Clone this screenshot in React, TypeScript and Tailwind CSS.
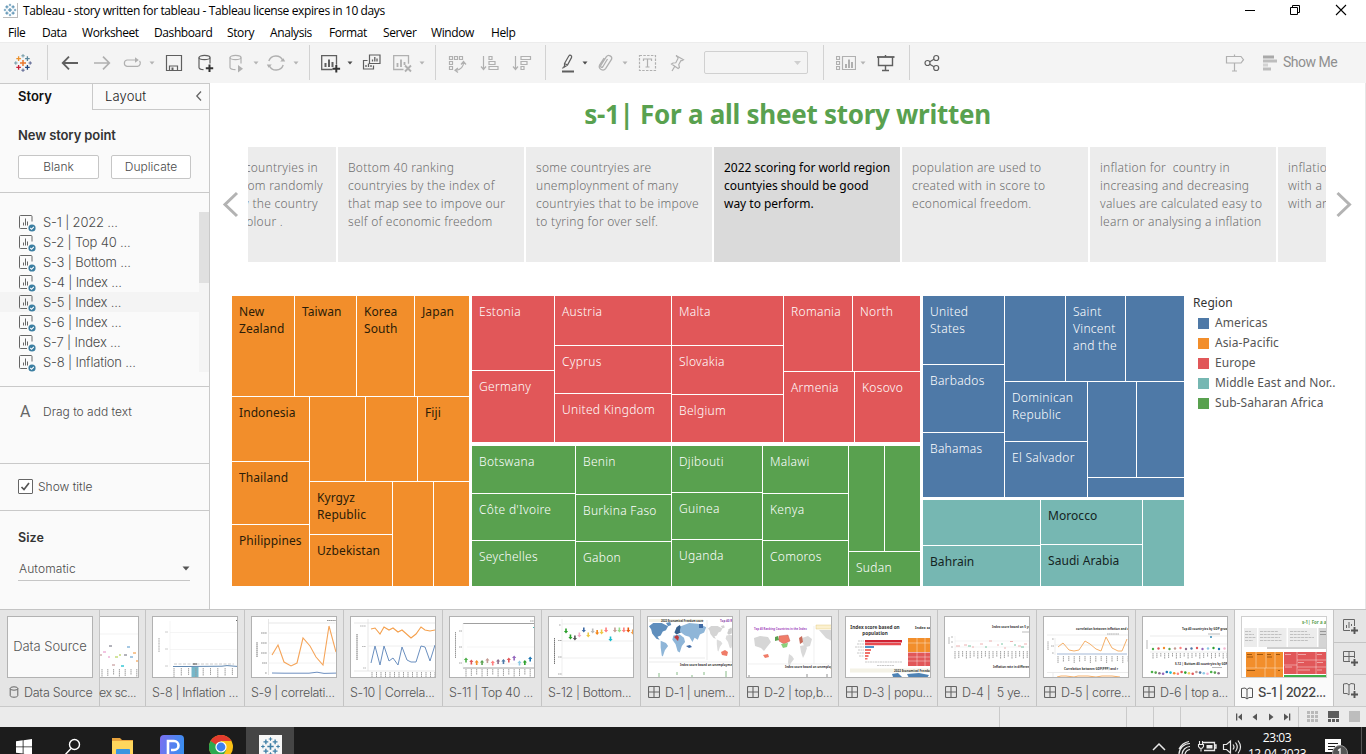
import React from "react";

/* ---------- shared bits ---------- */

type IconProps = { children: React.ReactNode; className?: string; stroke?: string };

function Icon({ children, className = "", stroke = "#5f5f5f" }: IconProps) {
  return (
    <svg
      width="20"
      height="20"
      viewBox="0 0 20 20"
      fill="none"
      stroke={stroke}
      strokeWidth="1.2"
      className={"shrink-0 " + className}
    >
      {children}
    </svg>
  );
}

function Caret({ className = "", dark = false }: { className?: string; dark?: boolean }) {
  return (
    <svg width="6" height="4" viewBox="0 0 6 4" className={"shrink-0 " + className}>
      <path d="M0.5 0.5h5L3 3.5z" fill={dark ? "#4b4b4b" : "#b4b4b4"} />
    </svg>
  );
}

function Sep({ className = "" }: { className?: string }) {
  return <div className={"h-[35px] w-px shrink-0 bg-[#d2d2d2] " + className} />;
}

function plus(x: number, y: number, r: number) {
  return `M${x - r} ${y}h${2 * r}M${x} ${y - r}v${2 * r}`;
}

function TableauMark({ size, mono = false }: { size: number; mono?: boolean }) {
  const c = (color: string) => (mono ? "#3f7fa6" : color);
  return (
    <svg width={size} height={size} viewBox="0 0 20 20" fill="none" strokeWidth="1.3" className="shrink-0">
      <path d={plus(10, 10, 3)} stroke={c("#e8762c")} strokeWidth="1.5" />
      <path d={plus(5.6, 5.6, 2.3)} stroke={c("#eb912c")} />
      <path d={plus(14.4, 5.6, 2.3)} stroke={c("#59879b")} />
      <path d={plus(5.6, 14.4, 2.3)} stroke={c("#c72037")} />
      <path d={plus(14.4, 14.4, 2.3)} stroke={c("#1f447e")} />
      <path d={plus(10, 2.8, 1.7)} stroke={c("#7199a6")} strokeWidth="1" />
      <path d={plus(10, 17.2, 1.7)} stroke={c("#5b6591")} strokeWidth="1" />
      <path d={plus(2.8, 10, 1.7)} stroke={c("#7199a6")} strokeWidth="1" />
      <path d={plus(17.2, 10, 1.7)} stroke={c("#5b6591")} strokeWidth="1" />
    </svg>
  );
}

/* ---------- window chrome ---------- */

function TitleBar() {
  return (
    <div className="flex h-[21px] items-center pl-[3px] text-black">
      <div className="flex h-[15px] w-[15px] items-center justify-center border-r border-b border-[#bbb] bg-white">
        <TableauMark size={14} mono />
      </div>
      <span className="ml-[5px] w-[500px] text-[12px] tracking-[-0.38px] whitespace-nowrap">
        Tableau - story written for tableau - Tableau license expires in 10 days
      </span>
      <svg width="120" height="20" viewBox="0 0 120 20" fill="none" stroke="#000" className="ml-[717px]">
        <path d="M5 9.5h10" />
        <path d="M50.5 6.5h7v7h-7zM52.5 6.5v-2h7v7h-2" />
        <path d="M96 4l10 10M106 4l-10 10" strokeWidth="1.1" />
      </svg>
    </div>
  );
}

const menuItems: [string, string][] = [
  ["File", "w-[34px]"],
  ["Data", "w-[40px]"],
  ["Worksheet", "w-[72px]"],
  ["Dashboard", "w-[73px]"],
  ["Story", "w-[43px]"],
  ["Analysis", "w-[59px]"],
  ["Format", "w-[54px]"],
  ["Server", "w-[48px]"],
  ["Window", "w-[60px]"],
  ["Help", "w-[40px]"],
];

function MenuBar() {
  return (
    <div className="flex h-[21px] items-center pt-[2px] pl-[8px] text-[12px] tracking-[-0.4px] text-black">
      {menuItems.map(([label, w]) => (
        <span key={label} className={"shrink-0 whitespace-nowrap " + w}>
          {label}
        </span>
      ))}
    </div>
  );
}

const G = "#b0b0b0";

function Toolbar() {
  return (
    <div className="flex h-[41px] items-center border-t border-[#ececec] bg-[#f4f4f4] pb-px">
      <div className="ml-[13px]">
        <TableauMark size={20} />
      </div>
      <Sep className="ml-[14px]" />
      <Icon className="ml-[12px]">
        <path d="M2.5 10H18M9 3.7L2.7 10 9 16.3" strokeWidth="1.8" />
      </Icon>
      <Icon className="ml-[12px]" stroke={G}>
        <path d="M2 10h15.500M11 3.700l6.300 6.300-6.300 6.300" strokeWidth="1.7" />
      </Icon>
      <Icon className="ml-[10px]" stroke={G}>
        <path d="M13 7H5a3.200 3.200 0 0 0 0 6.300h10.500a3.200 3.200 0 0 0 2-5.300" />
        <path d="M13 4.300v5.400l3.800-2.700z" fill={G} stroke="none" />
      </Icon>
      <Caret className="ml-[7px]" />
      <Icon className="ml-[9px]">
        <path d="M2.500 2.500h15v15h-15zM5.500 17.500v-4.500h8v4.500" />
        <path d="M7.500 14.500h2v3h-2z" fill="#5f5f5f" stroke="none" />
      </Icon>
      <Icon className="ml-[12px]">
        <ellipse cx="8.500" cy="4.500" rx="5.500" ry="2.200" />
        <path d="M3 4.500v10c0 1.200 2 2 4.500 2.200M14 4.500v6" />
        <path d="M13.500 11.500v7.500M9.800 15.300h7.400" stroke="#333" strokeWidth="2" />
      </Icon>
      <Icon className="ml-[10px]" stroke={G}>
        <ellipse cx="9.500" cy="4.500" rx="5.500" ry="2.200" />
        <path d="M4 4.500v10c0 1.200 2 2 5.500 2.200M15 4.500v6" />
        <path d="M12 12v7.500l5-3.700z" fill={G} stroke="none" />
      </Icon>
      <Caret className="ml-[7px]" />
      <Icon className="ml-[7px]" stroke={G}>
        <path d="M2.800 8A7.500 7.500 0 0 1 16.800 7.500M17.200 12A7.500 7.500 0 0 1 3.200 12.500" strokeWidth="1.400" />
        <path d="M14.200 8.500h5l-1.800-3.300zM5.800 11.500h-5l1.800 3.300z" fill={G} stroke="none" />
      </Icon>
      <Caret className="ml-[7px]" />
      <Sep className="ml-[10px]" />
      <Icon className="ml-[11px]">
        <path d="M11.500 16.500H0.700V2.700h14.800v9" strokeWidth="1.300" />
        <path d="M4.500 14V10M8 14V6.500M11.500 14V9" strokeWidth="2" />
        <path d="M15.300 12v7.600M11.500 15.800h7.600" stroke="#333" strokeWidth="2" />
      </Icon>
      <Caret dark className="ml-[6px]" />
      <Icon className="ml-[9px]">
        <path d="M7.500 2h10.500v8.500h-10.500zM5.500 7.500h-4v8.500h10v-3.500" />
        <path d="M10.500 8.500V6.500M12.800 8.500V4M15 8.500V5.500M4 14v-2M6.500 14v-3.500M9 14v-2" strokeWidth="1.300" />
      </Icon>
      <Icon className="ml-[11px]" stroke={G}>
        <path d="M10.500 16.500H0.700V2.700h14.800v8" strokeWidth="1.300" />
        <path d="M4.500 14V10M8 14V6.500M11.500 12V9" strokeWidth="1.800" />
        <path d="M12 12.500l6 6M18 12.500l-6 6" strokeWidth="1.900" />
      </Icon>
      <Caret className="ml-[6px]" />
      <Sep className="ml-[10px]" />
      <Icon className="ml-[11px]" stroke={G}>
        <path d="M2.500 3.500h3v3h-3zM7.500 3.500h3v3h-3zM12.500 3.500h3v3h-3zM2.500 8.500h3v3h-3zM2.500 13.500h3v3h-3z" />
        <path d="M16.500 9c.5 4-3 8-7.500 8.300M14 11.500l2.500-3 2.500 3M11 15l-3 2.300 3 2.200" />
      </Icon>
      <Icon className="ml-[13px]" stroke={G}>
        <path d="M3.500 3v13M1 13.500l2.500 3 2.500-3M9 3.500h3v3h-3zM9 8.500h6v3h-6zM9 13.500h9v3h-9z" />
      </Icon>
      <Icon className="ml-[12px]" stroke={G}>
        <path d="M3.500 3v13M1 13.500l2.500 3 2.500-3M9 3.500h9.500v3H9zM9 8.500h6v3H9zM9 13.500h3v3H9z" />
      </Icon>
      <Sep className="ml-[13px]" />
      <Icon className="ml-[12px]">
        <path d="M6.500 10.500L10.800 3q.7-1.300 2-.6t.8 2L9.500 12l-3 2zM6.500 10.500l3 1.500" />
        <path d="M4.500 15.500l1.500-2" />
        <path d="M4 18.500h12" strokeWidth="2" />
      </Icon>
      <Caret dark className="ml-[4px]" />
      <Icon className="ml-[7px]" stroke={G}>
        <path
          d="M12.500 6l-4.500 7.500q-1 1.300-1.900.7t-.2-2l5.500-8.500q1.500-2 3.700-.8t1.500 3.300l-6 9.500q-1.800 2.300-4.500.8t-1.500-4.500l4.500-7"
          strokeWidth="1.300"
        />
      </Icon>
      <Caret className="ml-[7px]" />
      <Icon className="ml-[10px]" stroke={G}>
        <path d="M1.500 2.500h16v15h-16z" strokeDasharray="2.500 1.300" />
        <path d="M5.500 8V6h8v2M9.500 6v8M7.500 14h4" />
      </Icon>
      <Icon className="ml-[9px]" stroke={G}>
        <path d="M9 2.500l7.500 4.200-1.500 1-1-.3-2.200 4.100.6 3-1.300 1L4.500 11l1.500-1 2.800-.2 2.200-4.300-.2-1.300zM8 13l-3 5" />
      </Icon>
      <div className="ml-[17px] flex h-[23px] w-[104px] shrink-0 items-center justify-end rounded-[2px] border border-[#d0d0d0] pr-[6px]">
        <svg width="7" height="4" viewBox="0 0 7 4">
          <path d="M0 0h7L3.500 4z" fill="#cfcfcf" />
        </svg>
      </div>
      <Sep className="ml-[15px]" />
      <Icon className="ml-[12px]" stroke={G}>
        <path d="M0.500 3.500h3v3h-3zM0.500 8.500h3v3h-3zM0.500 13.500h3v3h-3zM6.500 3.500h13v13h-13z" />
        <path d="M10 15v-4M13 15V6.500M16 15V9" strokeWidth="2" />
      </Icon>
      <Caret className="ml-[4px]" />
      <Icon className="ml-[10px]">
        <path d="M1 4h17.500" strokeWidth="1.800" />
        <path d="M2.500 4v8.500h14V4M9.500 2v2M9.500 12.500v5M6 17.500h7" strokeWidth="1.400" />
      </Icon>
      <Sep className="ml-[13px]" />
      <Icon className="ml-[12px]">
        <circle cx="5.500" cy="10" r="2.500" />
        <circle cx="14.200" cy="5" r="2.500" />
        <circle cx="14.200" cy="15" r="2.500" />
        <path d="M7.700 8.700l4.300-2.500M7.700 11.300l4.300 2.500" />
      </Icon>
      <Icon className="ml-[283px]" stroke={G}>
        <path d="M1.500 3.500h14.500l2.500 3.200-2.500 3.300H1.500zM9.500 1.500v2M9.500 10v8M7 18h5" />
      </Icon>
      <svg width="14" height="16" viewBox="0 0 14 16" className="ml-[18px] shrink-0">
        <path d="M0 0.500h11v3H0z" fill="#a9a9a9" />
        <path d="M0 4.500h14v3H0zM0 12.500h8v3H0z" fill="#bdbdbd" />
        <path d="M0 8.500h5v3H0z" fill="#d3d3d3" />
      </svg>
      <span className="ml-[6px] font-['Roboto'] text-[14px] tracking-[-0.5px] whitespace-nowrap text-[#8f8f8f]">Show Me</span>
    </div>
  );
}

/* ---------- sidebar ---------- */

const sheets = [
  "S-1 | 2022 ...",
  "S-2 | Top 40 ...",
  "S-3 | Bottom ...",
  "S-4 | Index ...",
  "S-5 | Index ...",
  "S-6 | Index ...",
  "S-7 | Index ...",
  "S-8 | Inflation ...",
];

function SheetIcon() {
  return (
    <svg width="18" height="18" viewBox="0 0 18 18" fill="none" stroke="#666" className="shrink-0">
      <path d="M8 13.500H1.500q-1 0-1-1v-11q0-1 1-1h10.500q1 0 1 1v5" />
      <path d="M4.500 10.500v-3M6.500 10.500v-7M8.500 10.500V6.500" />
      <circle cx="13" cy="13" r="3.600" fill="#3b7ea1" stroke="none" />
      <path d="M11.300 13l1.300 1.300 2.200-2.500" stroke="#fff" strokeWidth="1.100" />
    </svg>
  );
}

function Sidebar() {
  return (
    <aside className="flex w-[210px] shrink-0 flex-col border-t border-r border-[#c9c9c9] bg-[#fafafa] font-['Inter'] text-[#4a4a4a]">
      <div className="flex h-[26px] text-[13px]">
        <div className="w-[92px] pt-[3px] pl-[18px] font-semibold text-[#111]">Story</div>
        <div className="flex flex-1 items-center border-b border-l border-[#c9c9c9] pl-[12px] font-light text-[#222]">
          <span className="tracking-[0.150px]">Layout</span>
          <svg width="8" height="12" viewBox="0 0 8 12" fill="none" stroke="#666" strokeWidth="1.300" className="mr-[6px] mb-[2px] ml-auto">
            <path d="M6 1.500L1.800 6 6 10.500" />
          </svg>
        </div>
      </div>
      <div className="h-[83px] border-b border-[#c9c9c9] pt-[15px] pl-[18px]">
        <div className="text-[13px] leading-[20px] font-semibold tracking-[-0.1px] text-[#333]">New story point</div>
        <div className="mt-[10px] flex gap-[12px] text-[12px] font-light">
          <div className="flex h-[24px] w-[81px] items-center justify-center rounded-[2px] border border-[#c6c6c6] bg-white pb-px">Blank</div>
          <div className="flex h-[24px] w-[80px] items-center justify-center rounded-[2px] border border-[#c6c6c6] bg-white pb-px">
            Duplicate
          </div>
        </div>
      </div>
      <div className="flex h-[194px] border-b border-[#c9c9c9] pt-[19px] pb-[14px]">
        <div className="flex-1">
          {sheets.map((s, i) => (
            <div
              key={s}
              className={"flex h-[20px] items-center pl-[19px] text-[13px] font-light " + (i === 4 ? "bg-[#f4f4f4]" : "")}
            >
              <div className="pt-[4px]">
                <SheetIcon />
              </div>
              <span className="ml-[6px] pt-[2px] tracking-[-0.170px] whitespace-pre">{s}</span>
            </div>
          ))}
        </div>
        <div className="w-[10px] bg-[#f4f4f4]">
          <div className="h-[71px] bg-[#e0e0e0]" />
        </div>
      </div>
      <div className="flex h-[77px] border-b border-[#c9c9c9] pt-[16px] pl-[20px] text-[12px] font-light">
        <span className="w-[23px] font-['Roboto'] text-[16px] leading-[18px] font-normal text-[#666]">A</span>
        <span className="leading-[18px]">Drag to add text</span>
      </div>
      <div className="flex h-[47px] items-center border-b border-[#c9c9c9] pb-px pl-[18px] text-[12px] font-light">
        <div className="flex h-[15px] w-[15px] items-center justify-center rounded-[1px] border border-[#666] bg-white">
          <svg width="11" height="11" viewBox="0 0 11 11" fill="none" stroke="#555" strokeWidth="1.700">
            <path d="M1.500 6l2.500 2.500 5-6.500" />
          </svg>
        </div>
        <span className="ml-[5px]">Show title</span>
      </div>
      <div className="pt-[17px] pl-[18px]">
        <div className="text-[12.500px] leading-[20px] font-semibold tracking-[0.100px] text-[#333]">Size</div>
        <div className="mt-[9px] flex h-[24px] w-[172px] items-center justify-between border-b border-[#c6c6c6] pl-px text-[12px] font-light">
          <span className="tracking-[0.100px]">Automatic</span>
          <svg width="8" height="5" viewBox="0 0 8 5">
            <path d="M0.500 0.500h7L4 4.500z" fill="#555" />
          </svg>
        </div>
      </div>
    </aside>
  );
}

/* ---------- story navigator ---------- */

const storyPoints: string[][] = [
  ["Bottom 40 ranking", "countryies by the index of", "that map see to impove our", "self of economic freedom"],
  ["some countryies are", "unemploynment of many", "countryies that to be impove", "to tyring for over self."],
  ["2022 scoring for world region", "countyies should be good", "way to perform."],
  ["population are used to", "created with in score to", "economical freedom."],
  ["inflation for  country in", "increasing and decreasing", "values are calculated easy to", "learn or analysing a inflation"],
];

function Navigator() {
  return (
    <div className="flex h-[115px] items-center">
      <svg width="38" height="30" viewBox="0 0 38 30" fill="none" stroke="#b3b3b3" strokeWidth="3" className="mb-[2px] shrink-0">
        <path d="M27 4L15 15.500 27 27" />
      </svg>
      <div className="flex h-full w-[1078px] shrink-0 gap-[2px] overflow-hidden text-[12px] leading-[18px] whitespace-pre">
        <div className="flex w-[88px] shrink-0 flex-col items-end overflow-hidden bg-[#ececec] pt-[11.500px] font-light tracking-[0.280px] text-[#6e6e6e]">
          <div className="mr-[18px]">countryies in</div>
          <div className="mr-[13px]">from randomly</div>
          <div className="mr-[18px]">by the country</div>
          <div className="mr-[53px]">colour .</div>
        </div>
        {storyPoints.map((lines, i) => (
          <div
            key={i}
            className={
              "w-[186px] shrink-0 overflow-hidden pt-[11.500px] pl-[10px] " +
              (i === 2
                ? "bg-[#dadada] font-normal tracking-[-0.020px] text-black"
                : "bg-[#ececec] font-light tracking-[0.260px] text-[#6e6e6e]")
            }
          >
            {lines.map((l) => (
              <div key={l}>{l}</div>
            ))}
          </div>
        ))}
        <div className="w-[48px] shrink-0 overflow-hidden bg-[#ececec] pt-[11.500px] pl-[10px] font-light tracking-[0.280px] text-[#6e6e6e]">
          <div>inflation</div>
          <div>with a</div>
          <div>with and</div>
        </div>
      </div>
      <svg width="38" height="30" viewBox="0 0 38 30" fill="none" stroke="#b3b3b3" strokeWidth="3" className="mb-[2px] shrink-0">
        <path d="M11.500 4L23.500 15.500 11.500 27" />
      </svg>
    </div>
  );
}

/* ---------- treemap ---------- */

type Leaf = { t?: string };
type Split = { dir: "row" | "col"; kids: [number, Node][] };
type Node = Leaf | Split;

const leaf = (t?: string): Leaf => ({ t });
const row = (...kids: [number, Node][]): Split => ({ dir: "row", kids });
const col = (...kids: [number, Node][]): Split => ({ dir: "col", kids });

const asia = col(
  [100, row([62, leaf("New\nZealand")], [61, leaf("Taiwan")], [57, leaf("Korea\nSouth")], [54, leaf("Japan")])],
  [
    189,
    row(
      [77, col([64, leaf("Indonesia")], [62, leaf("Thailand")], [61, leaf("Philippines")])],
      [
        159,
        col(
          [84, row([55, leaf()], [51, leaf()], [51, leaf("Fiji")])],
          [104, row([82, col([52, leaf("Kyrgyz\nRepublic")], [51, leaf("Uzbekistan")])], [40, leaf()], [35, leaf()])],
        ),
      ],
    ),
  ],
);

const europe = row(
  [82, col([74, leaf("Estonia")], [71, leaf("Germany")])],
  [116, col([49, leaf("Austria")], [47, leaf("Cyprus")], [48, leaf("United Kingdom")])],
  [111, col([49, leaf("Malta")], [48, leaf("Slovakia")], [47, leaf("Belgium")])],
  [
    136,
    col([75, row([68, leaf("Romania")], [67, leaf("North")])], [70, row([70, leaf("Armenia")], [65, leaf("Kosovo")])]),
  ],
);

const africa = row(
  [103, col([47, leaf("Botswana")], [46, leaf("Côte d'Ivoire")], [45, leaf("Seychelles")])],
  [95, col([48, leaf("Benin")], [46, leaf("Burkina Faso")], [44, leaf("Gabon")])],
  [90, col([46, leaf("Djibouti")], [46, leaf("Guinea")], [46, leaf("Uganda")])],
  [85, col([47, leaf("Malawi")], [46, leaf("Kenya")], [45, leaf("Comoros")])],
  [71, col([105, row([35, leaf()], [35, leaf()])], [34, leaf("Sudan")])],
);

const americas = row(
  [81, col([68, leaf("United\nStates")], [67, leaf("Barbados")], [64, leaf("Bahamas")])],
  [
    179,
    col(
      [85, row([60, leaf()], [59, leaf("Saint\nVincent\nand the")], [58, leaf()])],
      [
        115,
        row(
          [82, col([59, leaf("Dominican\nRepublic")], [55, leaf("El Salvador")])],
          [96, col([95, row([48, leaf()], [47, leaf()])], [19, leaf()])],
        ),
      ],
    ),
  ],
);

const middleEast = row(
  [117, col([45, leaf()], [40, leaf("Bahrain")])],
  [101, col([44, leaf("Morocco")], [41, leaf("Saudi Arabia")])],
  [41, leaf()],
);

function Cells({ node, fill }: { node: Node; fill: string }) {
  if (!("dir" in node)) {
    return (
      <div className={"min-h-0 min-w-0 flex-1 overflow-hidden pt-[7px] pl-[7px] whitespace-pre " + fill}>{node.t}</div>
    );
  }
  return (
    <div className={"flex min-h-0 min-w-0 flex-1 gap-px " + (node.dir === "col" ? "flex-col" : "flex-row")}>
      {node.kids.map(([size, kid], i) => (
        <div key={i} className="flex min-h-0 min-w-0 shrink-0" style={{ flexBasis: size }}>
          <Cells node={kid} fill={fill} />
        </div>
      ))}
    </div>
  );
}

function Treemap() {
  return (
    <div className="flex h-[290px] w-[952px] shrink-0 gap-[3px] text-[12px] leading-[17px] font-light tracking-[0.300px]">
      <div className="flex w-[237px] font-normal tracking-[0.080px] text-[#2b1c08]">
        <Cells node={asia} fill="bg-[#f28e2b]" />
      </div>
      <div className="flex w-[448px] flex-col gap-[4px] text-white">
        <div className="flex h-[146px]">
          <Cells node={europe} fill="bg-[#e15759]" />
        </div>
        <div className="flex h-[140px]">
          <Cells node={africa} fill="bg-[#59a14f]" />
        </div>
      </div>
      <div className="flex w-[261px] flex-col gap-[3px]">
        <div className="flex h-[201px] text-white">
          <Cells node={americas} fill="bg-[#4e79a7]" />
        </div>
        <div className="flex h-[86px] font-normal tracking-[0.060px] text-[#142422]">
          <Cells node={middleEast} fill="bg-[#76b7b2]" />
        </div>
      </div>
    </div>
  );
}

const legend: [string, string][] = [
  ["Americas", "bg-[#4e79a7]"],
  ["Asia-Pacific", "bg-[#f28e2b]"],
  ["Europe", "bg-[#e15759]"],
  ["Middle East and Nor..", "bg-[#76b7b2]"],
  ["Sub-Saharan Africa", "bg-[#59a14f]"],
];

function StoryView() {
  return (
    <main className="flex flex-1 flex-col border-r border-[#e6e6e6] bg-white font-['Noto_Sans']">
      <h1 className="flex h-[64px] items-center justify-center pb-[2px] text-[26px] font-bold tracking-[-0.270px] text-[#59a14f]">
        s-1| For a all sheet story written
      </h1>
      <Navigator />
      <div className="mt-[34px] flex pl-[22px]">
        <Treemap />
        <div className="ml-[9px] text-[12px] font-normal tracking-[0.080px] text-[#555]">
          <div className="h-[17px] leading-[14px] text-[#333]">Region</div>
          {legend.map(([name, color]) => (
            <div key={name} className="flex h-[20px] items-center gap-[6px] pl-[5px] whitespace-nowrap">
              <span className={"h-[11px] w-[11px] " + color} />
              {name}
            </div>
          ))}
        </div>
      </div>
    </main>
  );
}

/* ---------- sheet tabs ---------- */

const palette = ["#4daf4a", "#e15759", "#f28e2b", "#59a14f", "#c49c94", "#ff7f7f", "#8c6d8c", "#4e79a7", "#e15759", "#9467bd", "#8ecae6", "#2ca02c", "#1f77b4", "#f7b6d2", "#f1ce63", "#17becf"];

function Tiny({ x, y, s = 3, children, anchor, color = "#333", weight }: { x: number; y: number; s?: number; children: string; anchor?: "middle"; color?: string; weight?: string }) {
  return (
    <text x={x} y={y} fontSize={s} fill={color} textAnchor={anchor} fontWeight={weight} fontFamily="Noto Sans">
      {children}
    </text>
  );
}

function Ticks({ x, y, n, step, h }: { x: number; y: number; n: number; step: number; h: number }) {
  return (
    <g stroke="#999" strokeWidth="0.9" strokeDasharray="1.500 0.400">
      {Array.from({ length: n }, (_, i) => (
        <path key={i} d={`M${x + i * step} ${y}v${h - (i % 3)}`} />
      ))}
    </g>
  );
}

function WorldMap({ colored }: { colored?: boolean }) {
  const a = colored ? "#5f8fbd" : "#d4d4d4";
  const b = colored ? "#8fb6d8" : "#dcdcdc";
  return (
    <g>
      <path d="M0 3l4-3 8 0 6 3 -2 4 -3 1 -2 4 -3 1 2 3 -3-1 -4-5 -1-4z" fill={a} />
      <path d="M11 17l5 2 2 3 -3 4 -2 6 -1-1 -1-8z" fill={b} />
      <path d="M23 12l6-1 4 3 1 4 -3 4 -2 6 -2-1 -2-7 -3-4z" fill={b} />
      <path d="M24 9l2-5 3-2 2 3 -1 4 -4 2z" fill={colored ? "#37618f" : "#cccccc"} />
      <path d="M30 3l8-3 10 1 6 3 -2 5 -4 2 -2 5 -3-2 -2 4 -3-5 -4-1 -5-4z" fill={b} />
      <path d="M16 0l4-1 1 3 -3 1z" fill={a} />
    </g>
  );
}

function Down({ x, y, c }: { x: number; y: number; c: string }) {
  return <path d={`M${x - 0.8} ${y - 2.5}h1.600v2.500h1.300l-2.100 2.500-2.100-2.500h1.300z`} fill={c} />;
}
function Up({ x, y, c }: { x: number; y: number; c: string }) {
  return <path d={`M${x - 0.8} ${y + 2.5}h1.600v-2.500h1.300l-2.100-2.500-2.100 2.500h1.300z`} fill={c} />;
}

const thumbs: Record<string, React.ReactNode> = {
  s8: (
    <g>
      <path d="M18 5v46M18 16.500h67M18 33.500h67" stroke="#eee" strokeWidth="0.600" />
      <path d="M21 50.500l14 0 35 -.3 5-.6 10 .8" fill="none" stroke="#4e79a7" strokeWidth="0.900" />
      <path d="M39.500 51h7v10h-7z" fill="#76b7c9" />
      <Ticks x={22} y={52} n={9} step={7.300} h={9} />
      <path d="M7 36V22" stroke="#aaa" strokeDasharray="1.200 .4" />
      <path d="M13 16h3M13 33h3M13 50h3M22 48h60" stroke="#ccc" strokeDasharray="3 1.500" />
      <path d="M41 48h4" stroke="#444" />
      <path d="M84 4.500h2" stroke="#666" />
    </g>
  ),
  s9: (
    <g fill="none">
      <path d="M17.500 3v56M17.500 7h67" stroke="#ddd" strokeWidth="0.700" />
      <path d="M17.500 17h67M17.500 27h67M17.500 37h67M17.500 47h67" stroke="#f2f2f2" />
      <path d="M21 39l6-10 6 17 7 4 6-3 6-25 7 8 6 11 7 8 6-39 7 26" stroke="#f5a55a" strokeWidth="1.100" />
      <path d="M21 57l12 .2 25 0 8-1 7 1.200 12-.3" stroke="#6d8fc0" />
      <path d="M6 41V26" stroke="#777" strokeDasharray="1.500 .4" />
      <path d="M10 17h6M10 27h6M10 37h6M11 47h5M14 57h2M76 4.500h9" stroke="#999" strokeWidth="1.200" strokeDasharray="1.500 .3" />
    </g>
  ),
  s10: (
    <g fill="none">
      <path d="M18 3v52M4 7h81M4 55h81" stroke="#ddd" strokeWidth="0.700" />
      <path d="M18 30h67" stroke="#eee" />
      <path d="M21 13l4-1 5 6 4-7 5 3 4-2 5 4 4-2 9 8 5-4 5-7 4 3 5 1 5-1" stroke="#f5a04c" strokeWidth="1.100" />
      <path d="M21 47l4-17 5 19 4-19 5 15 4-3 5 7 4-18 5 13 4 2h5l5-16 4 1 5 14 5-16" stroke="#6a8fbf" />
      <path d="M7 44V18" stroke="#777" strokeDasharray="1.500 .4" />
      <path d="M10 10h6M12 30.500h4M13 52h3" stroke="#bbb" strokeDasharray="1.500 .3" />
      <Ticks x={22} y={56} n={15} step={4.500} h={7} />
    </g>
  ),
  s11: (
    <g>
      <path d="M14 7.500h71M14 52h71" stroke="#888" strokeWidth="0.800" />
      <path d="M14 7v45M18 31h67M18 48h67" stroke="#eee" strokeWidth="0.600" />
      {[44, 46, 46.5, 46.5, 44.500, 47, 45.500, 45.500, 44, 42, 47, 46.500, 43].map((y, i) => (
        <Up key={i} x={17 + i * 5.350} y={y} c={palette[i]} />
      ))}
      <path d="M6.500 42V16" stroke="#999" strokeDasharray="1.500 .4" />
      <path d="M10 15h3M10 31h3M10 47h3M81 5h4" stroke="#aaa" strokeDasharray="1.500 .3" />
      <path d="M84 11.500h2" stroke="#4bb" />
      <Ticks x={17} y={53} n={13} step={5.350} h={8} />
    </g>
  ),
  s12: (
    <g>
      <path d="M14 3v57M14 8h71M14 25h71M14 42h71" stroke="#e8e8e8" strokeWidth="0.700" />
      {[15, 21, 22, 19, 14, 19, 15, 16.500, 16, 14, 23, 14, 14, 14, 14, 16].map((y, i) => (
        <Down key={i} x={18 + i * 4.450} y={y} c={["#2ca02c", "#2ca02c", "#555", "#f4a9c5", "#3f6aa5", "#edc948", "#bbb", "#f58518", "#edc948", "#ff7f7f", "#17becf", "#c49c94", "#98df8a", "#ff7f7f", "#e8590c", "#f5a04c"][i]} />
      ))}
      <path d="M6.500 48V22" stroke="#777" strokeDasharray="1.500 .4" />
      <path d="M11 9h2M10 24.500h4M10 41h4M10 58h4" stroke="#aaa" strokeDasharray="1.500 .3" />
    </g>
  ),
  d1: (
    <g>
      <path d="M2 3h54v3H2z" fill="#f4f2e6" />
      <Tiny x={14} y={5.500} s={2.700} weight="bold">2022 Economical Freedom score</Tiny>
      <Tiny x={73} y={5.500} color="#8e44ad" weight="bold">Top 40 Ranking</Tiny>
      <g transform="translate(2 7) scale(1.060 1.050)"><WorldMap colored /></g>
      <path d="M27 21l3-2 2 2-1 4z" fill="#c0393b" />
      <path d="M39 30l4-1 2 2-3 1zM52 8h4v4h-4z" fill="#3f6aa5" />
      <g transform="translate(61 10) scale(.8)"><WorldMap /></g>
      <path d="M74 36l4-2 3 2-1 4-5-1z" fill="#f07c68" />
      <path d="M2 42h56M60 4v40M2 46h84" stroke="#ddd" strokeWidth="0.600" />
      <Tiny x={33} y={50} weight="bold">Index score based on unemployment</Tiny>
      <path d="M12 61v-4M30 59v-3M45 61v-2M57 59v-3M79 61v-6" stroke="#8b8" />
    </g>
  ),
  d2: (
    <g>
      <Tiny x={8} y={13.500} s={2.800} color="#a44bc0" weight="bold">Top 40 Ranking Countries in the Index</Tiny>
      <path d="M70 9h16v4H70z" fill="#fbf0cf" stroke="#e1c36b" strokeWidth=".4" />
      <path d="M8 22l6-2 8 1 3 5-4 5-3 4-3-3-6-2z" fill="#d6d6d6" />
      <path d="M43 38l3 2 2 3-3 4-2 5-1-6zM54 30l5-1 2 3-2 6-2 4-2-6zM56 22l6-2 4 3-2 7-4 1-3-3z" fill="#d9d9d9" />
      <path d="M29 21l3-1 1 4-4 1z" fill="#59a14f" />
      <path d="M33 20l9-1 2 6-6 3-5-3z" fill="#f07c68" stroke="#b55" strokeWidth=".4" />
      <path d="M35 28l7-1-1 4-4 1z" fill="#8bd17c" />
      <path d="M53 22l3-2 1 6-3 2z" fill="#c76b5a" />
      <path d="M17 39l5-1 1 3-4 1z" fill="#f07c68" />
      <path d="M73 14l13 0v11l-6-3z" fill="#d8d8d8" />
      <path d="M2 48h84M68 10v38" stroke="#e5e5e5" strokeWidth=".6" />
      <Tiny x={39} y={52} weight="bold">Index score based on unemployment</Tiny>
      <path d="M3 59v2M61 58v3M81 58v3" stroke="#777" strokeWidth=".8" />
    </g>
  ),
  d3: (
    <g>
      <Tiny x={30} y={13} s={4.700} anchor="middle" weight="bold">Index score based on</Tiny>
      <Tiny x={30} y={19} s={4.700} anchor="middle" weight="bold">population</Tiny>
      <Tiny x={70} y={13} s={3.800} weight="bold">Index score</Tiny>
      <path d="M20 24h37v2.500H20z" fill="#cf2233" />
      <path d="M20 27h36v2.300H20z" fill="#e84a4f" />
      <path d="M20 30h9v2H20z" fill="#4e93c9" />
      <path d="M20 33h6v2H20zM20 36h5v2h-5zM20 39h3.500v2h-3.500zM20 42h2.500v1.500h-2.500z" fill="#f0716a" />
      <path d="M13 25h6M12 28h7M10 31h9M13 34h6M12 37h7M14 40h5M20 46h37M32 49.500h17" stroke="#bbb" strokeWidth=".8" strokeDasharray="2 .5" />
      <path d="M63 22h23v14H63z" fill="#f28e2b" />
      <path d="M63 36.500h23V50H63z" fill="#e15759" />
      <path d="M63 27h23M72 22v28M80 22v28M63 41h23M63 45h23" stroke="#fff" strokeWidth=".4" />
      <path d="M5 52.500h81v4H5z" fill="#f4f2e6" />
      <Tiny x={49} y={55.500} weight="bold">2022 Economical Freedom score</Tiny>
      <path d="M47 58l6-1 4 4h-9zM62 58l12-1 10 2-2 3H64z" fill="#4e83b5" />
    </g>
  ),
  d4: (
    <g>
      <Tiny x={48} y={12} weight="bold">Index score based on 5 year</Tiny>
      <path d="M11 20v14M11 25h74M11 31h74" stroke="#eee" strokeWidth=".6" />
      <path d="M12 30h4M20 29h3M28 31h2M36 28h3M45 25h3M53 29h2M60 32h2M66 25.500h3M74 30h3M80 28h3" stroke="#e8a0a0" strokeWidth=".8" />
      <path d="M24 30h3M41 31h2M57 28h2M70 29h2M77 31h3" stroke="#59b88f" strokeWidth=".8" />
      <Ticks x={11} y={35} n={20} step={3.800} h={8} />
      <path d="M5 28v-7M7 21h2M7 26h2M7 31h2M78 16h8" stroke="#aaa" strokeWidth=".8" />
      <Tiny x={49} y={52} weight="bold">Inflation rate in different</Tiny>
    </g>
  ),
  d5: (
    <g fill="none">
      <Tiny x={33} y={14} weight="bold">correlation between inflation and unemp</Tiny>
      <path d="M4 19h82M12 22v17M12 29h74" stroke="#e5e5e5" strokeWidth=".7" />
      <path d="M15 31l5-4 6 7 5 1 5-1 6-9 5 3 6 5 5 2 5-14 6 11 6 3 4 0 5-12" stroke="#f5b06a" />
      <path d="M14 38h70" stroke="#8aa4cc" strokeWidth=".8" />
      <Ticks x={15} y={40} n={14} step={5.400} h={7} />
      <path d="M5 34v-9M9 23h2M8 30h3M9 37h2M64 18h12" stroke="#999" strokeWidth=".8" strokeDasharray="1.500 .3" />
      <Tiny x={21} y={54} weight="bold">Correlation between GDP(PPP) and r</Tiny>
      <path d="M14 61l4-1h5l8 1 4-1h10l8 1 6-1h10l8 1" stroke="#f5b06a" />
      <path d="M4 56.500h82M10 57v4" stroke="#ddd" strokeWidth=".6" />
    </g>
  ),
  d6: (
    <g>
      <Tiny x={40} y={14} weight="bold">Top 40 countryies by GDP growth</Tiny>
      <path d="M8 20h78M8 36h78M8 28h78" stroke="#ddd" strokeWidth=".6" />
      {Array.from({ length: 14 }, (_, i) => (
        <circle key={i} cx={11 + i * 5.500} cy={33 - (i % 3) * 0.500} r="1.200" fill={palette[i]} />
      ))}
      <path d="M69 20v2" stroke="#17a" strokeWidth="1.300" />
      <Ticks x={11} y={37} n={20} step={3.900} h={6} />
      <path d="M5 33v-9M66 18h12M70 51.500h10" stroke="#999" strokeWidth=".7" />
      <Tiny x={33} y={49} weight="bold">S-12 | Bottom 40 countryies by GDP</Tiny>
      {Array.from({ length: 19 }, (_, i) => (
        <circle key={i} cx={10 + i * 3.700} cy={56 + ((i * 5) % 4) * 0.600} r="1.300" fill={palette[(i * 3) % 16]} />
      ))}
    </g>
  ),
  story: (
    <g>
      <Tiny x={61} y={8} s={4.400} color="#59a14f" weight="bold">s-1| For a all sheet</Tiny>
      <path d="M3 12h13v19H3zM17.500 12h28v19h-28zM47 12h29v19H47z" fill="#ececec" />
      <path d="M77.500 12H86v19h-8.500z" fill="#d4d4d4" />
      <path d="M4 15.500h6M4 18.500h9M4 21.500h11M4 24.500h8M19 15.500h18M19 18.500h22M19 21.500h20M19 24.500h22M49 15.500h17M49 18.500h20M49 21.500h24M49 24.500h18" stroke="#bbb" strokeWidth=".9" strokeDasharray="3 .7" />
      <path d="M79 15.500h7M79 18.500h7M26 32h60" stroke="#888" strokeWidth=".8" />
      <path d="M5 36h37v25H5z" fill="#f28e2b" />
      <path d="M43 36h43v22H43z" fill="#e15759" />
      <path d="M43 59h43v2H43z" fill="#3fae49" />
      <path d="M5 52h37M15 36v16M25 36v16M34 36v25M43 49h13M56 36v22M56 44h30M56 51h30M75 36v22M24 52v9" stroke="#fff" strokeWidth=".4" />
      <path d="M6 38.500h5M6 41h6M16 38.500h6M26 38.500h4M26 41h5M35 38.500h4M6 54.500h8M37 54.500h2" stroke="#7a3e00" strokeWidth=".7" />
      <path d="M44 38.500h6M57 38.500h8M57 46.500h6M57 54h12M44 51h7M76 38.500h5M76 46.500h6M76 54h5" stroke="#f7c7c7" strokeWidth=".7" />
    </g>
  ),
};

function Thumb({ id, className = "border-[#b2b2b2]" }: { id: string; className?: string }) {
  return (
    <div className={"h-[62px] w-[86px] shrink-0 overflow-hidden border bg-white tracking-normal " + className}>
      <svg width="84" height="60" viewBox="1 1 84 60">
        {thumbs[id]}
      </svg>
    </div>
  );
}

function GridIcon() {
  return (
    <svg width="12" height="12" viewBox="0 0 12 12" fill="none" stroke="#666" className="mr-[5px] mb-[2px] ml-px shrink-0">
      <path d="M1.500 .5h9q1 0 1 1v9q0 1-1 1h-9q-1 0-1-1v-9q0-1 1-1zM6 .5v11M.5 6h11" strokeWidth="1.100" />
    </svg>
  );
}

const tabs: { id: string; label: string; kind: "s" | "d" }[] = [
  { id: "s8", label: "S-8 | Inflation ...", kind: "s" },
  { id: "s9", label: "S-9 | correlati...", kind: "s" },
  { id: "s10", label: "S-10 | Correla...", kind: "s" },
  { id: "s11", label: "S-11 | Top 40 ...", kind: "s" },
  { id: "s12", label: "S-12 | Bottom...", kind: "s" },
  { id: "d1", label: "D-1 | unem...", kind: "d" },
  { id: "d2", label: "D-2 | top,b...", kind: "d" },
  { id: "d3", label: "D-3 | popu...", kind: "d" },
  { id: "d4", label: "D-4 |  5 ye...", kind: "d" },
  { id: "d5", label: "D-5 | corre...", kind: "d" },
  { id: "d6", label: "D-6 | top a...", kind: "d" },
];

function TabStrip() {
  return (
    <div className="flex h-[97px] border-t border-[#c4c4c4] bg-[#e5e5e5] font-['Inter'] text-[12.500px] font-light tracking-[-0.330px] text-[#555]">
      <div className="w-[100px] shrink-0 border-r border-[#c4c4c4] pt-[6px] pl-[7px]">
        <div className="flex h-[62px] w-[86px] items-center justify-center border border-[#b2b2b2] bg-[#fafafa] text-[13px] tracking-[-0.050px] whitespace-nowrap">
          Data Source
        </div>
        <div className="mt-[5px] flex h-[20px] items-center pl-[2px] text-[12.500px]">
          <svg width="10" height="12" viewBox="0 0 10 12" fill="none" stroke="#666" className="mb-[2px] shrink-0">
            <ellipse cx="5" cy="2.500" rx="3.800" ry="1.700" />
            <path d="M1.200 2.500v7c0 2.300 7.600 2.300 7.600 0v-7" />
          </svg>
          <span className="ml-[5px] tracking-[-0.250px] whitespace-nowrap">Data Source</span>
        </div>
      </div>
      <div className="w-[46px] shrink-0 border-r border-[#c4c4c4] pt-[6px]">
        <div className="h-[62px] w-[39px] border-y border-r border-[#b2b2b2] bg-white">
          <svg width="38" height="60" viewBox="0 0 38 60">
            <path d="M0 38h2M12 48h3" stroke="#b88" />
            <path d="M3 35h3M8 40h2" stroke="#e78ac3" />
            <path d="M9 29h3M24 38h3" stroke="#667" />
            <path d="M15 40h3M19 38h2" stroke="#a6c93a" />
            <path d="M21 49h3" stroke="#17becf" strokeWidth="1.300" />
            <path d="M27 30h3M30 40h3" stroke="#4e93c9" />
            <path d="M33 36h3M36 44h2" stroke="#f28e2b" />
            <Ticks x={2} y={52} n={7} step={5.800} h={8} />
            <path d="M0 17h38" stroke="#f3f3f3" />
          </svg>
        </div>
        <div className="mt-[5px] -ml-px h-[20px] leading-[20px] tracking-[-0.500px] whitespace-nowrap">ex sc...</div>
      </div>
      {tabs.map((t) => (
        <div key={t.id} className="w-[99px] shrink-0 border-r border-[#c4c4c4] pt-[6px] pl-[6px]">
          <Thumb id={t.id} />
          <div className="mt-[5px] flex h-[20px] items-center whitespace-pre">
            {t.kind === "d" && <GridIcon />}
            <span>{t.label}</span>
          </div>
        </div>
      ))}
      <div className="w-[99px] shrink-0 border-r border-[#c4c4c4] bg-[#fafafa] pt-[6px] pl-[6px]">
        <Thumb id="story" className="border-[#cfcfcf]" />
        <div className="mt-[5px] flex h-[20px] items-center text-[13px] font-medium tracking-[-0.600px] whitespace-pre text-[#444]">
          <svg width="12" height="13" viewBox="0 0 12 13" fill="none" stroke="#555" className="mr-[5px] shrink-0">
            <path d="M6 2.500v9.500M6 2.500L4 1 .5 1.500v9L4 10.500l2 1.500 2-1.500 3.500 0v-9L8 1z" />
          </svg>
          S-1 | 2022...
        </div>
      </div>
      <div className="flex flex-1 flex-col">
        <div className="flex h-[33px] items-center justify-center border-b border-[#c4c4c4]">
          <svg width="17" height="17" viewBox="0 0 17 17" fill="none" stroke="#666">
            <path d="M8 12.500H1.500v-11h11v6.500M4.500 10V7M7 10V4M9.500 8V6" />
            <path d="M12.500 9v7M9 12.500h7" strokeWidth="1.900" stroke="#555" />
          </svg>
        </div>
        <div className="flex h-[32px] items-center justify-center border-b border-[#c4c4c4]">
          <svg width="17" height="17" viewBox="0 0 17 17" fill="none" stroke="#666">
            <path d="M8 11.500H1.500v-10h11v6.500M7 1.500v10M1.500 6.500h11" />
            <path d="M12.500 9v7M9 12.500h7" strokeWidth="1.900" stroke="#555" />
          </svg>
        </div>
        <div className="flex h-[31px] items-center justify-center">
          <svg width="17" height="17" viewBox="0 0 17 17" fill="none" stroke="#666">
            <path d="M7 3v10M7 3L5 1.500 1.500 2v9.500H5L7 13M7 3l2-1.500 3.500.5v6" />
            <path d="M12.500 9v7M9 12.500h7" strokeWidth="1.900" stroke="#555" />
          </svg>
        </div>
      </div>
    </div>
  );
}

function StatusBar() {
  return (
    <div className="flex h-[21px] border-t border-[#c9c9c9] bg-[#ebebeb]">
      <div className="w-[1000px] shrink-0 border-r border-[#cacaca]" />
      <div className="w-[127px] shrink-0 border-r border-[#cacaca]" />
      <div className="w-[27px] shrink-0 border-r border-[#cacaca]" />
      <div className="w-[27px] shrink-0 border-r border-[#cacaca]" />
      <div className="w-[47px] shrink-0 border-r border-[#cacaca]" />
      <div className="flex w-[71px] shrink-0 items-center border-r border-[#cacaca] pb-px pl-[7px]">
        <svg width="58" height="8" viewBox="0 0 58 8" fill="#555">
          <path d="M1 0.500h1.300v7H1zM7 .5v7L3 4zM22 .5v7L17.500 4zM34 .5v7L38.500 4zM49 .5v7L53.500 4zM54 .5h1.300v7H54z" />
        </svg>
      </div>
      <div className="flex flex-1 items-center gap-[10px] pb-px pl-[8px]">
        <svg width="11" height="11" viewBox="0 0 11 11" fill="#b9b9b9">
          <path d="M0 0h3v3H0zM4 0h3v3H4zM8 0h3v3H8zM0 4h3v3H0zM4 4h3v3H4zM8 4h3v3H8zM0 8h3v3H0zM4 8h3v3H4zM8 8h3v3H8z" />
        </svg>
        <svg width="11" height="11" viewBox="0 0 11 11" fill="#5c5c5c">
          <path d="M0 0h11v7H0zM0 8h3v3H0zM4 8h3v3H4zM8 8h3v3H8z" />
        </svg>
        <div className="h-[11px] w-[11px] bg-[#bdbdbd]" />
      </div>
    </div>
  );
}

/* ---------- windows taskbar ---------- */

function Taskbar() {
  return (
    <div className="flex h-[27px] items-start overflow-hidden bg-[#1c1c1c]">
      <svg width="16" height="16" viewBox="0 0 16 16" fill="#fff" className="mt-[12px] ml-[16px] shrink-0">
        <path d="M0 2.200l6.700-.9v6.200H0zM7.500 1.200L16 0v7.500H7.500zM0 8.300h6.700v6.300L0 13.700zM7.500 8.300H16V16l-8.500-1.200z" />
      </svg>
      <svg width="18" height="20" viewBox="0 0 18 20" fill="none" stroke="#fff" strokeWidth="1.400" className="mt-[11px] ml-[32px] shrink-0">
        <circle cx="10.500" cy="6.500" r="5" />
        <path d="M7 10.500L0 18" />
      </svg>
      <svg width="22" height="20" viewBox="0 0 22 20" className="mt-[11px] ml-[30px] shrink-0">
        <path d="M0 0h8l2 2h11v18H0z" fill="#e8a33d" />
        <path d="M0 3h21v17H0z" fill="#ffd65c" />
        <path d="M4 20v-8q0-1 1-1h12q1 0 1 1v8h-4v-4H8v4z" fill="#3a95e0" />
      </svg>
      <svg width="24" height="24" viewBox="0 0 24 24" className="mt-[8px] ml-[26px] shrink-0">
        <defs>
          <linearGradient id="pg" x1="0" y1="0" x2="1" y2="0.300">
            <stop offset="0" stopColor="#7b6ff0" />
            <stop offset="1" stopColor="#3b8ef0" />
          </linearGradient>
        </defs>
        <rect width="24" height="28" rx="4" fill="url(#pg)" />
        <path d="M8 22V6h6a4.500 4.500 0 0 1 0 9h-3" fill="none" stroke="#fff" strokeWidth="2.600" />
      </svg>
      <svg width="24" height="24" viewBox="0 0 24 24" className="mt-[8px] ml-[25px] shrink-0">
        <circle cx="12" cy="12" r="12" fill="#fbc116" />
        <path d="M1.600 6A12 12 0 0 0 12 24l5.200-9-5.200-3z" fill="#2da94f" />
        <path d="M1.600 6l5.200 9L12 6z" fill="#2da94f" />
        <path d="M1.600 6A12 12 0 0 1 22.400 6H12L6.800 9.500z" fill="#e33b2e" />
        <circle cx="12" cy="12" r="5.600" fill="#fff" />
        <circle cx="12" cy="12" r="4.400" fill="#3f80ee" />
      </svg>
      <div className="ml-[13px] flex h-[27px] w-[48px] shrink-0 items-start justify-center bg-[#454545] pt-[8px]">
        <div className="flex h-[23px] w-[23px] shrink-0 items-center justify-center bg-[#f7f7f7]">
          <TableauMark size={21} mono />
        </div>
      </div>
      <svg width="100" height="27" viewBox="0 0 100 27" fill="none" stroke="#e8e8e8" className="ml-[854px] shrink-0">
        <path d="M5 23l6-6 6 6" strokeWidth="1.500" />
        <path d="M31 27a11 11 0 0 1 11-10.500M34 27a8.500 8.500 0 0 1 8-7.500M37 27a6 6 0 0 1 5-4.500M31 22a14 14 0 0 1 10-7.500" strokeWidth="1.200" />
        <path d="M55 15.500h11.500v8H56M66.500 18h1.500v3h-1.500" strokeWidth="1.300" />
        <path d="M58.500 18h6v3.500h-6z" fill="#e8e8e8" stroke="none" />
        <path d="M51.500 14v3.500M54.500 14v3.500M50.500 17.500h5v2q-1 2-2.500 2t-2.500-2zM53 21.500v3" strokeWidth="1.100" />
        <path d="M75.500 17.500h3l4-3.500v12l-4-3.500h-3zM85 17.500q2 2.500 0 5M87.500 15.500q3.500 4.500 0 9M90 13.500q5 6.500 0 13" strokeWidth="1.200" />
      </svg>
      <div className="-ml-[11px] flex w-[80px] shrink-0 flex-col items-center pt-[3px] text-[12px] leading-[16px] tracking-[-0.450px] text-white">
        <span>23:03</span>
        <span className="whitespace-nowrap">12-04-2023</span>
      </div>
      <svg width="46" height="27" viewBox="0 0 46 27" className="ml-[3px] shrink-0">
        <path d="M5 12h16v13H5z" fill="#fff" />
        <path d="M8 16.500h10M8 19.500h7M8 22.500h5" stroke="#1c1c1c" />
        <circle cx="20" cy="26" r="7.500" fill="#555" stroke="#9a9a9a" />
        <path d="M18 23.500l2-1.500v5" fill="none" stroke="#fff" strokeWidth="1.300" />
        <path d="M41.500 0v27" stroke="#555" />
      </svg>
    </div>
  );
}

export default function App() {
  return (
    <div className="flex h-[754px] w-[1366px] flex-col overflow-hidden bg-white font-['Open_Sans']">
      <TitleBar />
      <MenuBar />
      <Toolbar />
      <div className="flex h-[526px]">
        <Sidebar />
        <StoryView />
      </div>
      <TabStrip />
      <StatusBar />
      <Taskbar />
    </div>
  );
}
